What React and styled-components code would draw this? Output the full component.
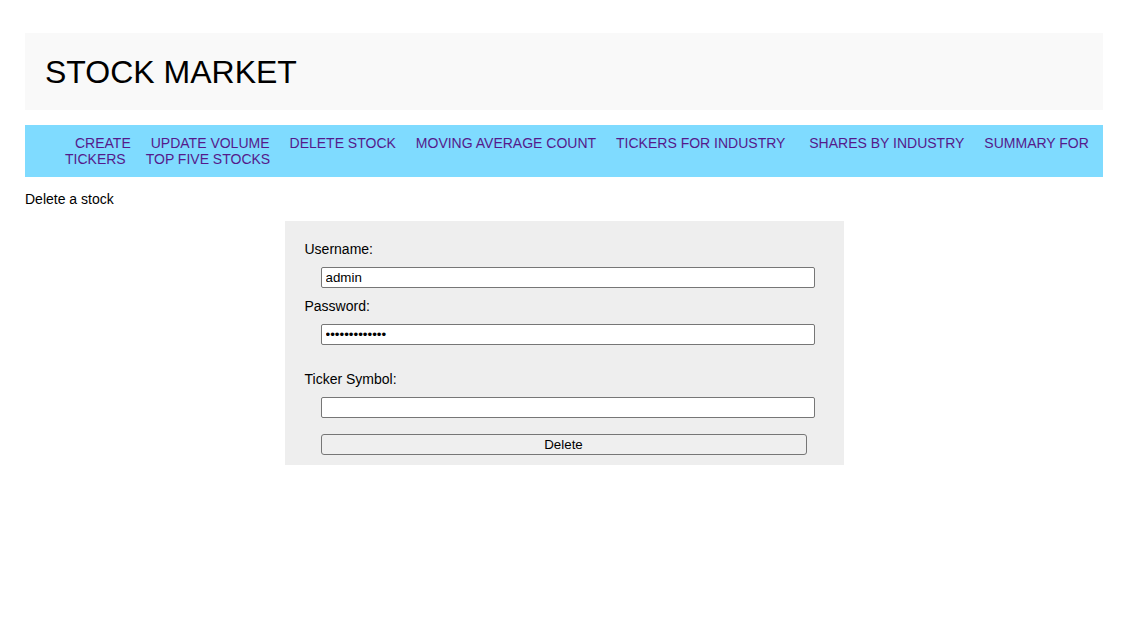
import React from "react";
import styled, { createGlobalStyle } from "styled-components";

const GlobalStyle = createGlobalStyle`
  body {
    margin: 0;
    background: #fff;
    font-family: "Liberation Sans", Arial, sans-serif;
    font-size: 14px;
    color: #000;
  }
`;

const Page = styled.div`
  padding: 33px 36px 0 25px;
`;

const Header = styled.header`
  background: #f9f9f9;
  height: 77px;
  box-sizing: border-box;
  padding: 21px 20px 19px;
`;

const Title = styled.h1`
  margin: 0;
  font-size: 32px;
  font-weight: 400;
  line-height: 37px;
`;

const Nav = styled.ul`
  margin: 15px 0 0;
  padding: 10px 0 10px 40px;
  list-style: none;
  background: #7fdbff;
  line-height: 16px;
`;

const NavItem = styled.li`
  display: inline;
`;

const NavLink = styled.a`
  padding: 0 10px;
  color: #551a8b;
  text-decoration: none;
  font-size: 14px;
`;

const Caption = styled.p`
  margin: 14px 0;
  line-height: 16px;
`;

const FormBox = styled.form`
  width: 559px;
  box-sizing: border-box;
  margin: 0 auto;
  background: #eeeeee;
  padding: 20px 29px 10px 20px;
  display: flex;
  flex-direction: column;
`;

const Label = styled.label`
  display: block;
  line-height: 16px;
  margin-top: ${(p) => p.$top || 0}px;
`;

const Input = styled.input`
  box-sizing: border-box;
  width: 494px;
  height: 21px;
  margin: ${(p) => p.$top || 0}px 0 0 16px;
  padding: 1px 4px;
  border: 1px solid #767676;
  border-radius: 2px;
  background: #fff;
  font-family: "Liberation Sans", Arial, sans-serif;
  font-size: 13.33px;
  color: #000;
`;

const Button = styled.button`
  box-sizing: border-box;
  width: 486px;
  height: 21px;
  margin: 16px 0 0 16px;
  padding: 0;
  border: 1px solid #767676;
  border-radius: 3px;
  background: #efefef;
  font-family: "Liberation Sans", Arial, sans-serif;
  font-size: 13.33px;
  color: #000;
`;

const links = [
  "CREATE",
  "UPDATE VOLUME",
  "DELETE STOCK",
  "MOVING AVERAGE COUNT",
  "TICKERS FOR INDUSTRY",
  "SHARES BY INDUSTRY",
  "SUMMARY FOR TICKERS",
  "TOP FIVE STOCKS",
];

const App = () => {
  return (
    <Page>
      <GlobalStyle />
      <Header>
        <Title>STOCK MARKET</Title>
      </Header>
      <Nav>
        {links.map((l) => (
          <React.Fragment key={l}>
            <NavItem>
              <NavLink href="#">{l}</NavLink>
            </NavItem>
            {l === "TICKERS FOR INDUSTRY" && " "}
          </React.Fragment>
        ))}
      </Nav>
      <Caption>Delete a stock</Caption>
      <FormBox onSubmit={(e) => e.preventDefault()}>
        <Label>Username:</Label>
        <Input $top={10} type="text" defaultValue="admin" />
        <Label $top={10}>Password:</Label>
        <Input $top={10} type="password" defaultValue="adminpassword" />
        <Label $top={26}>Ticker Symbol:</Label>
        <Input $top={10} type="text" />
        <Button type="submit">Delete</Button>
      </FormBox>
    </Page>
  );
};

export default App;
